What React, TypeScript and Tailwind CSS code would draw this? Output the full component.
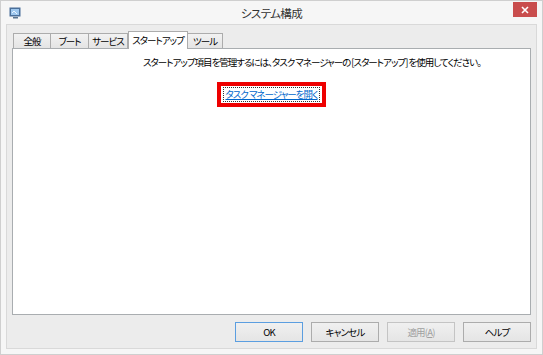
import React from "react";

const jp = { fontFamily: '"Noto Sans CJK JP", "Noto Sans", sans-serif' } as React.CSSProperties;

function Tab({ label, w, selected }: { label: string; w: number; selected?: boolean }) {
  if (selected) {
    return (
      <div
        className="relative z-10 -mb-px flex h-[18px] items-start justify-center whitespace-nowrap border border-b-0 border-[#acacac] bg-white pt-[1px] text-[9.5px] tracking-[-1px] text-black [font-feature-settings:'palt']"
        style={{ width: w }}
      >
        {label}
      </div>
    );
  }
  return (
    <div
      className="flex h-[15px] items-center justify-center whitespace-nowrap border border-b-0 border-l-0 border-[#acacac] bg-gradient-to-b from-[#f2f2f2] to-[#e4e4e4] text-[9.5px] tracking-[-1px] text-black [font-feature-settings:'palt'] first:border-l"
      style={{ width: w }}
    >
      {label}
    </div>
  );
}

function Btn({ children, primary, disabled }: { children: React.ReactNode; primary?: boolean; disabled?: boolean }) {
  return (
    <div
      className={
        "flex h-[20px] w-[68px] items-center justify-center whitespace-nowrap border bg-gradient-to-b from-[#f0f0f0] to-[#e5e5e5] text-[9.5px] tracking-[-0.8px] [font-feature-settings:'palt'] " +
        (disabled ? "border-[#c4c4c4] text-[#a0a0a0]" : primary ? "border-[#5b9ee0] text-black" : "border-[#acacac] text-black")
      }
    >
      {children}
    </div>
  );
}

export default function App() {
  return (
    <div style={jp} className="flex h-[355px] w-[543px] flex-col border border-[#cfcfcf] bg-[#f6f6f6]">
      {/* title bar */}
      <div className="relative flex h-[23px] items-center">
        <div className="ml-[8px] mt-[1px]">
          <svg width="12" height="12" viewBox="0 0 12 12">
            <rect x="0.5" y="0.5" width="11" height="9" fill="#4a6f9a" />
            <rect x="2" y="2" width="8" height="6" fill="#9ec7ee" />
            <path d="M3 6 L5 4 L8 7" stroke="#e8f4ff" strokeWidth="1" fill="none" />
            <rect x="4" y="10" width="5" height="1.5" fill="#5a7590" />
          </svg>
        </div>
        <div className="absolute left-0 right-0 top-[4px] text-center text-[11.5px] tracking-[-0.6px] text-[#333333] [font-feature-settings:'palt']">
          システム構成
        </div>
        <div className="absolute right-[5px] top-[1px] flex h-[15px] w-[24px] items-center justify-center bg-[#c94d4d]">
          <svg width="8" height="8" viewBox="0 0 8 8">
            <path d="M1 1 L7 7 M7 1 L1 7" stroke="white" strokeWidth="1.6" />
          </svg>
        </div>
      </div>
      {/* client area */}
      <div className="mx-[5px] flex h-[325px] flex-col border border-[#d9d9d9] bg-[#ececec] px-[5px]">
        {/* tabs */}
        <div className="mt-[5px] flex h-[18px] items-end pl-[1px]">
          <Tab label="全般" w={38} />
          <Tab label="ブート" w={38} />
          <Tab label="サービス" w={39} />
          <Tab label="スタートアップ" w={60} selected />
          <Tab label="ツール" w={35} />
        </div>
        {/* panel */}
        <div className="flex h-[267px] flex-col border border-[#a9adb0] bg-white">
          <div className="mt-[6px] whitespace-nowrap pl-[130px] text-[9.5px] leading-[14px] tracking-[-1px] text-black [font-feature-settings:'palt']">
            スタートアップ項目を管理するには、タスク マネージャーの [スタートアップ] を使用してください。
          </div>
          <div className="mt-[13px] flex justify-center">
            <div className="flex h-[25px] items-center border-[4px] border-[#ee0000] px-[2px]">
              <span className="block h-[15px] whitespace-nowrap border border-dotted border-[#333] px-[1px] text-[9.5px] leading-[13px] tracking-[-1px] text-[#0066cc] underline [font-feature-settings:'palt']">
                タスク マネージャーを開く
              </span>
            </div>
          </div>
        </div>
        {/* buttons */}
        <div className="mt-[7px] flex justify-end gap-[8px]">
          <Btn primary>OK</Btn>
          <Btn>キャンセル</Btn>
          <Btn disabled>
            適用(<span className="underline">A</span>)
          </Btn>
          <Btn>ヘルプ</Btn>
        </div>
      </div>
    </div>
  );
}
